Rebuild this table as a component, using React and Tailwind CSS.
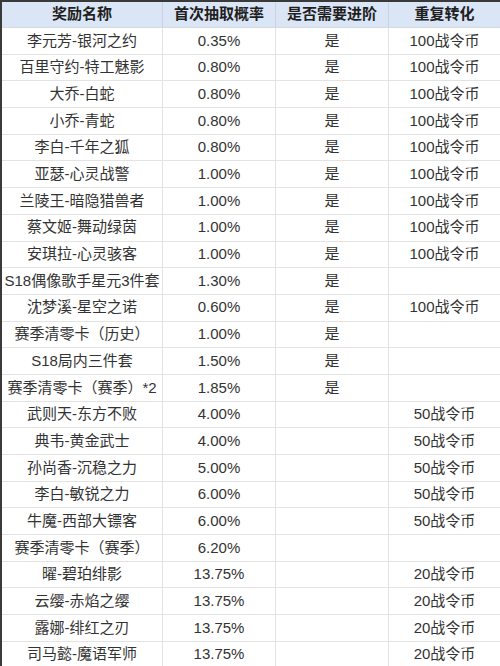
const rows = [
  ["李元芳-银河之约", "0.35%", "是", "100战令币"],
  ["百里守约-特工魅影", "0.80%", "是", "100战令币"],
  ["大乔-白蛇", "0.80%", "是", "100战令币"],
  ["小乔-青蛇", "0.80%", "是", "100战令币"],
  ["李白-千年之狐", "0.80%", "是", "100战令币"],
  ["亚瑟-心灵战警", "1.00%", "是", "100战令币"],
  ["兰陵王-暗隐猎兽者", "1.00%", "是", "100战令币"],
  ["蔡文姬-舞动绿茵", "1.00%", "是", "100战令币"],
  ["安琪拉-心灵骇客", "1.00%", "是", "100战令币"],
  ["S18偶像歌手星元3件套", "1.30%", "是", ""],
  ["沈梦溪-星空之诺", "0.60%", "是", "100战令币"],
  ["赛季清零卡（历史）", "1.00%", "是", ""],
  ["S18局内三件套", "1.50%", "是", ""],
  ["赛季清零卡（赛季）*2", "1.85%", "是", ""],
  ["武则天-东方不败", "4.00%", "", "50战令币"],
  ["典韦-黄金武士", "4.00%", "", "50战令币"],
  ["孙尚香-沉稳之力", "5.00%", "", "50战令币"],
  ["李白-敏锐之力", "6.00%", "", "50战令币"],
  ["牛魔-西部大镖客", "6.00%", "", "50战令币"],
  ["赛季清零卡（赛季）", "6.20%", "", ""],
  ["曜-碧珀绯影", "13.75%", "", "20战令币"],
  ["云缨-赤焰之缨", "13.75%", "", "20战令币"],
  ["露娜-绯红之刃", "13.75%", "", "20战令币"],
  ["司马懿-魔语军师", "13.75%", "", "20战令币"],
];

const headers = ["奖励名称", "首次抽取概率", "是否需要进阶", "重复转化"];

export default function App() {
  return (
    <div
      className="w-[500px] h-[666px] overflow-hidden bg-white border-t-2 border-l-2 border-[#3a3a3a]"
      style={{ fontFamily: '"Liberation Sans", "Noto Sans CJK SC", sans-serif' }}
    >
      <div className="grid grid-cols-[161px_113px_113px_111px] h-[26px] bg-[#dae5f5] border-b border-[#d3dae4]">
        {headers.map((h, i) => (
          <div
            key={h}
            className="flex items-center justify-center text-[15px] font-bold text-[#1f1f1f] border-r border-[#c9d3e2] last:border-r-0"
          >
            {h}
          </div>
        ))}
      </div>
      {rows.map((r, i) => (
        <div
          key={i}
          className="grid grid-cols-[161px_113px_113px_111px] h-[26.7px] border-b border-[#e3e3e3]"
        >
          {r.map((c, j) => (
            <div
              key={j}
              className="flex items-center justify-center text-[15px] text-[#333] whitespace-nowrap border-r border-[#e3e3e3] last:border-r-0"
            >
              {c}
            </div>
          ))}
        </div>
      ))}
    </div>
  );
}
